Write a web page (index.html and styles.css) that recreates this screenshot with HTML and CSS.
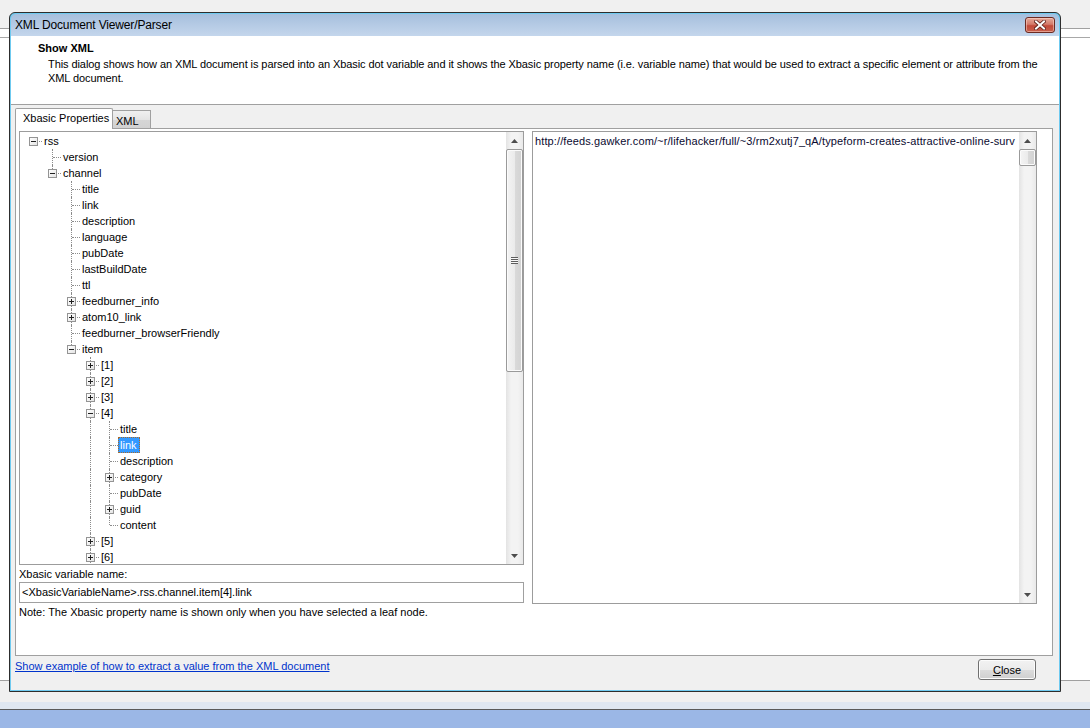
FILE: index.html
```html
<!DOCTYPE html>
<html lang="en">
<head>
    <meta charset="UTF-8">
    <meta name="viewport" content="width=device-width, initial-scale=1.0">
    <title>XML Document Viewer/Parser</title>
    <link rel="stylesheet" href="styles.css">
</head>
<body>
    <div class="backwin"><div class="backwin-bar"></div></div>

    <div class="dialog">
        <div class="titlebar">
            <span class="title">XML Document Viewer/Parser</span>
            <button class="close-x" title="Close">
                <svg width="12" height="10" viewBox="0 0 12 10">
                    <path d="M2 1.5 L10 8.5 M10 1.5 L2 8.5" stroke="#5a1d16" stroke-width="3.6" stroke-linecap="square"/>
                    <path d="M2 1.5 L10 8.5 M10 1.5 L2 8.5" stroke="#fff" stroke-width="2" stroke-linecap="square"/>
                </svg>
            </button>
        </div>

        <div class="header">
            <div class="header-title">Show XML</div>
            <div class="header-text">This dialog shows how an XML document is parsed into an Xbasic dot variable and it shows the Xbasic property name (i.e. variable name) that would be used to extract a specific element or attribute from the<br>XML document.</div>
        </div>

        <div class="main">
            <div class="tabs">
                <div class="tab active">Xbasic Properties</div>
                <div class="tab">XML</div>
            </div>

            <div class="panel">
                <div class="left-col">
                    <div class="tree-box">
                        <div class="tree">
                            <div class="row"><i class="root"><b class="box"></b></i><span class="lbl">rss</span></div>
                            <div class="row"><i></i><i class="tee"></i><span class="lbl">version</span></div>
                            <div class="row"><i></i><i class="end"><b class="box"></b></i><span class="lbl">channel</span></div>
                            <div class="row"><i></i><i></i><i class="tee"></i><span class="lbl">title</span></div>
                            <div class="row"><i></i><i></i><i class="tee"></i><span class="lbl">link</span></div>
                            <div class="row"><i></i><i></i><i class="tee"></i><span class="lbl">description</span></div>
                            <div class="row"><i></i><i></i><i class="tee"></i><span class="lbl">language</span></div>
                            <div class="row"><i></i><i></i><i class="tee"></i><span class="lbl">pubDate</span></div>
                            <div class="row"><i></i><i></i><i class="tee"></i><span class="lbl">lastBuildDate</span></div>
                            <div class="row"><i></i><i></i><i class="tee"></i><span class="lbl">ttl</span></div>
                            <div class="row"><i></i><i></i><i class="tee"><b class="box plus"></b></i><span class="lbl">feedburner_info</span></div>
                            <div class="row"><i></i><i></i><i class="tee"><b class="box plus"></b></i><span class="lbl">atom10_link</span></div>
                            <div class="row"><i></i><i></i><i class="tee"></i><span class="lbl">feedburner_browserFriendly</span></div>
                            <div class="row"><i></i><i></i><i class="end"><b class="box"></b></i><span class="lbl">item</span></div>
                            <div class="row"><i></i><i></i><i></i><i class="tee"><b class="box plus"></b></i><span class="lbl">[1]</span></div>
                            <div class="row"><i></i><i></i><i></i><i class="tee"><b class="box plus"></b></i><span class="lbl">[2]</span></div>
                            <div class="row"><i></i><i></i><i></i><i class="tee"><b class="box plus"></b></i><span class="lbl">[3]</span></div>
                            <div class="row"><i></i><i></i><i></i><i class="tee"><b class="box"></b></i><span class="lbl">[4]</span></div>
                            <div class="row"><i></i><i></i><i></i><i class="pipe"></i><i class="tee"></i><span class="lbl">title</span></div>
                            <div class="row"><i></i><i></i><i></i><i class="pipe"></i><i class="tee"></i><span class="lbl selected">link</span></div>
                            <div class="row"><i></i><i></i><i></i><i class="pipe"></i><i class="tee"></i><span class="lbl">description</span></div>
                            <div class="row"><i></i><i></i><i></i><i class="pipe"></i><i class="tee"><b class="box plus"></b></i><span class="lbl">category</span></div>
                            <div class="row"><i></i><i></i><i></i><i class="pipe"></i><i class="tee"></i><span class="lbl">pubDate</span></div>
                            <div class="row"><i></i><i></i><i></i><i class="pipe"></i><i class="tee"><b class="box plus"></b></i><span class="lbl">guid</span></div>
                            <div class="row"><i></i><i></i><i></i><i class="pipe"></i><i class="end"></i><span class="lbl">content</span></div>
                            <div class="row"><i></i><i></i><i></i><i class="tee"><b class="box plus"></b></i><span class="lbl">[5]</span></div>
                            <div class="row"><i></i><i></i><i></i><i class="tee"><b class="box plus"></b></i><span class="lbl">[6]</span></div>
                        </div>
                        <div class="vscroll">
                            <div class="sb-btn"><svg width="7" height="4" viewBox="0 0 7 4"><path d="M3.5 0 L7 4 L0 4 Z" fill="#4d4d4d"/></svg></div>
                            <div class="sb-thumb tree-thumb"><span class="grip"></span></div>
                            <div class="sb-track"></div>
                            <div class="sb-btn"><svg width="7" height="4" viewBox="0 0 7 4"><path d="M0 0 L7 0 L3.5 4 Z" fill="#4d4d4d"/></svg></div>
                        </div>
                    </div>
                    <div class="field-label">Xbasic variable name:</div>
                    <div class="field">&lt;XbasicVariableName&gt;.rss.channel.item[4].link</div>
                    <div class="note">Note: The Xbasic property name is shown only when you have selected a leaf node.</div>
                </div>

                <div class="xml-box">
                    <div class="xml-text">http://feeds.gawker.com/~r/lifehacker/full/~3/rm2xutj7_qA/typeform-creates-attractive-online-surv</div>
                    <div class="vscroll">
                        <div class="sb-btn"><svg width="7" height="4" viewBox="0 0 7 4"><path d="M3.5 0 L7 4 L0 4 Z" fill="#4d4d4d"/></svg></div>
                        <div class="sb-thumb xml-thumb"></div>
                        <div class="sb-track"></div>
                        <div class="sb-btn"><svg width="7" height="4" viewBox="0 0 7 4"><path d="M0 0 L7 0 L3.5 4 Z" fill="#4d4d4d"/></svg></div>
                    </div>
                </div>
            </div>

            <div class="footer">
                <a class="example-link" href="#">Show example of how to extract a value from the XML document</a>
                <button class="btn"><u>C</u>lose</button>
            </div>
        </div>
    </div>

    <div class="taskbar"></div>
</body>
</html>
```

FILE: styles.css
```css
body {
    margin: 0;
    width: 1090px;
    height: 728px;
    overflow: hidden;
    position: relative;
    background: #f0f0f0;
    font-family: "Liberation Sans", Arial, sans-serif;
    font-size: 11px;
    color: #000;
}

/* window sitting behind the dialog */
.backwin {
    position: absolute;
    left: 0;
    top: 28px;
    width: 1090px;
    height: 653px;
    box-sizing: border-box;
    background: #fff;
    border-top: 1px solid #a0a0a0;
    border-bottom: 1px solid #a0a0a0;
}

.backwin-bar {
    height: 8px;
    border-bottom: 1px solid #a8a8a8;
}

.taskbar {
    position: absolute;
    left: 0;
    top: 702px;
    width: 1090px;
    height: 26px;
    background: linear-gradient(#dfe7f1 0, #dfe7f1 7px, #5a5a5a 7px, #5a5a5a 8px, #9bb7e6 8px);
}

/* dialog frame */
.dialog {
    position: absolute;
    left: 9px;
    top: 12px;
    width: 1052px;
    height: 680px;
    box-sizing: border-box;
    border: 1px solid #2d2d2d;
    border-radius: 6px 6px 0 0;
    padding: 1px;
    background: #6fcaf0;
    display: flex;
    flex-direction: column;
}

.titlebar {
    height: 22px;
    flex: none;
    display: flex;
    align-items: center;
    justify-content: space-between;
    padding: 0 4px 0 4px;
    background: linear-gradient(#a6bfdd, #c4d6ec);
    border-radius: 5px 5px 0 0;
}

.title {
    font-size: 12px;
    letter-spacing: -0.15px;
    color: #000;
}

.close-x {
    width: 30px;
    height: 16px;
    padding: 0;
    border: 1px solid #6b2a22;
    border-radius: 3px;
    background: linear-gradient(#e6a999 0%, #d47a6a 45%, #c24a3a 55%, #c8604c 100%);
    box-shadow: inset 0 0 0 1px rgba(255, 220, 210, 0.5);
    display: flex;
    align-items: center;
    justify-content: center;
}

.header {
    height: 69px;
    flex: none;
    box-sizing: border-box;
    background: #fff;
    border-bottom: 1px solid #a0a0a0;
    padding: 5px 0 0 27px;
}

.header-title {
    font-weight: bold;
    line-height: 14px;
    margin-bottom: 2px;
}

.header-text {
    margin-left: 10px;
    line-height: 14px;
    letter-spacing: -0.08px;
    white-space: nowrap;
}

.main {
    flex: 1;
    background: #f0f0f0;
    padding: 3px 6px 0 4px;
    display: flex;
    flex-direction: column;
}

/* tabs */
.tabs {
    display: flex;
    align-items: flex-end;
    height: 21px;
    margin-bottom: -1px;
    position: relative;
    z-index: 1;
}

.tab {
    box-sizing: border-box;
    line-height: 14px;
    border: 1px solid #a0a0a0;
    border-bottom: none;
}

.tab.active {
    width: 98px;
    height: 21px;
    padding: 2px 0 0 7px;
    background: #fff;
    border-radius: 2px 2px 0 0;
}

.tab:not(.active) {
    width: 38px;
    height: 18px;
    margin-bottom: 1px;
    padding: 3px 0 0 3px;
    border-left: none;
    background: linear-gradient(#f0f0f0, #e4e4e4 50%, #d6d6d6 51%, #d2d2d2);
}

.panel {
    height: 528px;
    box-sizing: border-box;
    border: 1px solid #a0a0a0;
    background: #fff;
    padding: 2px 15px 0 3px;
    display: flex;
    gap: 8px;
}

.left-col {
    width: 505px;
    display: flex;
    flex-direction: column;
}

/* tree */
.tree-box {
    height: 434px;
    box-sizing: border-box;
    border: 1px solid #9c9c9c;
    display: flex;
}

.tree {
    flex: 1;
    overflow: hidden;
    padding: 1px 0 0 5px;
}

.row {
    display: flex;
    height: 16px;
    white-space: nowrap;
}

.row i {
    flex: none;
    width: 19px;
    height: 16px;
    position: relative;
}

.row i.pipe::before,
.row i.tee::before,
.row i.end::before {
    content: '';
    position: absolute;
    left: 8px;
    top: 0;
    height: 16px;
    border-left: 1px dotted #8c8c8c;
}

.row i.end::before {
    height: 8px;
}

.row i.tee::after,
.row i.end::after,
.row i.root::after {
    content: '';
    position: absolute;
    left: 9px;
    top: 8px;
    width: 8px;
    border-top: 1px dotted #8c8c8c;
}

.box {
    position: absolute;
    left: 4px;
    top: 4px;
    width: 9px;
    height: 9px;
    box-sizing: border-box;
    border: 1px solid #949494;
    background: linear-gradient(135deg, #ffffff, #e4e4e4);
    z-index: 1;
}

.box::before {
    content: '';
    position: absolute;
    left: 1px;
    top: 3px;
    width: 5px;
    height: 1px;
    background: #202020;
}

.box.plus::after {
    content: '';
    position: absolute;
    left: 3px;
    top: 1px;
    width: 1px;
    height: 5px;
    background: #202020;
}

.lbl {
    display: block;
    height: 16px;
    box-sizing: border-box;
    line-height: 14px;
    margin-left: -2px;
    padding: 0 2px 0 1px;
    border: 1px solid transparent;
}

.lbl.selected {
    background: #3399ff;
    color: #fff;
    border: 1px dotted #a86a2a;
}

/* scrollbars */
.vscroll {
    width: 17px;
    flex: none;
    display: flex;
    flex-direction: column;
    background: linear-gradient(to right, #e3e3e3, #f3f3f3 30%, #f3f3f3 70%, #e9e9e9);
}

.sb-btn {
    height: 17px;
    flex: none;
    display: flex;
    align-items: center;
    justify-content: center;
}

.sb-thumb {
    flex: none;
    box-sizing: border-box;
    border: 1px solid #9a9a9a;
    border-radius: 2px;
    background: linear-gradient(to right, #f4f4f4, #ebebeb 50%, #dadada 51%, #d2d2d2);
    box-shadow: inset 0 0 0 1px #fbfbfb;
    display: flex;
    align-items: center;
    justify-content: center;
}

.tree-thumb {
    height: 223px;
}

.xml-thumb {
    height: 17px;
}

.grip {
    width: 7px;
    height: 7px;
    background: repeating-linear-gradient(#5e5e5e 0, #5e5e5e 1px, #f8f8f8 1px, #f8f8f8 2px);
}

.sb-track {
    flex: 1;
}

.field-label {
    margin-top: 2px;
    line-height: 14px;
}

.field {
    margin-top: 1px;
    height: 21px;
    box-sizing: border-box;
    border: 1px solid #a0a0a0;
    line-height: 19px;
    padding: 0 2px;
    white-space: nowrap;
    overflow: hidden;
}

.note {
    margin-top: 2px;
    line-height: 14px;
}

.xml-box {
    width: 505px;
    height: 473px;
    box-sizing: border-box;
    border: 1px solid #9c9c9c;
    display: flex;
}

.xml-text {
    flex: 1;
    overflow: hidden;
    white-space: nowrap;
    padding: 2px 0 0 2px;
    line-height: 14px;
    letter-spacing: 0.12px;
    color: #0a0a30;
}

/* footer */
.footer {
    display: flex;
    justify-content: space-between;
    align-items: flex-start;
    padding: 3px 17px 0 0;
}

.example-link {
    line-height: 14px;
    color: #0033cc;
}

.btn {
    width: 58px;
    height: 21px;
    padding: 0;
    border: 1px solid #707070;
    border-radius: 3px;
    background: linear-gradient(#f2f2f2 0%, #ebebeb 50%, #dddddd 51%, #cfcfcf 100%);
    box-shadow: inset 0 0 0 1px #fcfcfc;
    font-family: "Liberation Sans", Arial, sans-serif;
    font-size: 11px;
    color: #000;
}
```
